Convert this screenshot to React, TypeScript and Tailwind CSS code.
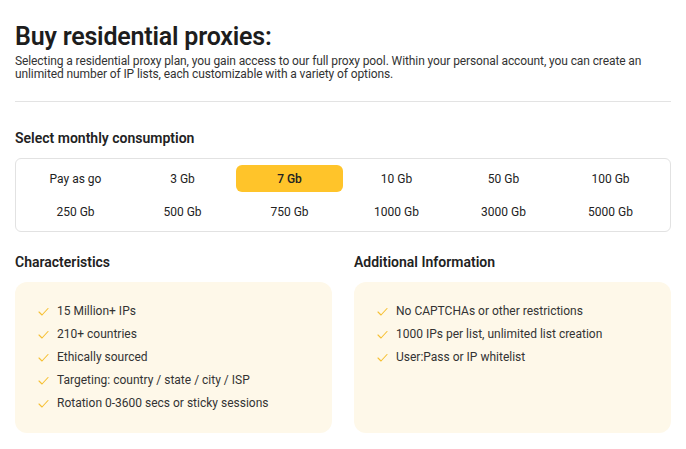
import React from "react";

const plans = [
  "Pay as go", "3 Gb", "7 Gb", "10 Gb", "50 Gb", "100 Gb",
  "250 Gb", "500 Gb", "750 Gb", "1000 Gb", "3000 Gb", "5000 Gb",
];

const characteristics = [
  "15 Million+ IPs",
  "210+ countries",
  "Ethically sourced",
  "Targeting: country / state / city / ISP",
  "Rotation 0-3600 secs or sticky sessions",
];

const additional = [
  "No CAPTCHAs or other restrictions",
  "1000 IPs per list, unlimited list creation",
  "User:Pass or IP whitelist",
];

function Check() {
  return (
    <svg width="11" height="9" viewBox="0 0 11 9" fill="none" className="shrink-0">
      <path d="M1 5 L4 8 L10 1.5" stroke="#f6c033" strokeWidth="1.1" strokeLinecap="round" strokeLinejoin="round" />
    </svg>
  );
}

function Card({ title, items }: { title: string; items: string[] }) {
  return (
    <div className="flex flex-col">
      <h3 className="text-[14px] font-semibold text-[#222] leading-[16px] h-[16px] mb-[12px]">{title}</h3>
      <ul className="bg-[#fef8e9] rounded-[12px] h-[151px] pt-[21px] pl-[23px] flex flex-col gap-[7px]">
        {items.map((t) => (
          <li key={t} className="flex items-center gap-[8px] text-[12px] leading-[16px] text-[#333]">
            <Check />
            <span>{t}</span>
          </li>
        ))}
      </ul>
    </div>
  );
}

export default function App() {
  return (
    <div className="w-[686px] h-[449px] bg-white px-[15px] pt-[22px]" style={{ fontFamily: "Roboto, 'Noto Sans', sans-serif" }}>
      <h1 className="text-[25px] font-semibold leading-[29px] text-[#1d1d1d] tracking-[-0.2px]">Buy residential proxies:</h1>
      <p className="mt-[4px] text-[12px] leading-[13px] text-[#333] tracking-[-0.1px] w-[650px]">
        Selecting a residential proxy plan, you gain access to our full proxy pool. Within your personal account, you can create an unlimited number of IP lists, each customizable with a variety of options.
      </p>
      <div className="mt-[20px] h-px bg-[#e3e3e3] w-[656px]" />
      <h3 className="mt-[28px] text-[14px] font-semibold text-[#222] leading-[16px]">Select monthly consumption</h3>
      <div className="mt-[12px] border border-[#e2e2e2] rounded-[6px] px-[6px] py-[6px] grid grid-cols-6 gap-y-[6px] w-[656px]">
        {plans.map((p) => (
          <div
            key={p}
            className={
              "h-[27px] flex items-center justify-center rounded-[6px] text-[12px] text-[#222] " +
              (p === "7 Gb" ? "bg-[#ffc42a] font-medium" : "")
            }
          >
            {p}
          </div>
        ))}
      </div>
      <div className="mt-[22px] grid grid-cols-2 gap-[22px]">
        <Card title="Characteristics" items={characteristics} />
        <Card title="Additional Information" items={additional} />
      </div>
    </div>
  );
}
